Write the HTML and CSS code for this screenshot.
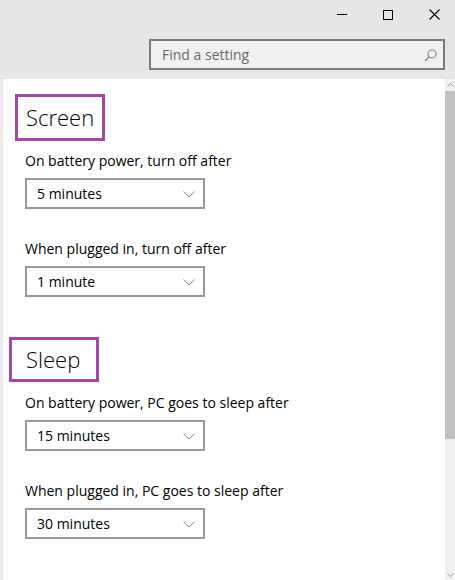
FILE: index.html
```html
<!DOCTYPE html>
<html lang="en">
<head>
  <meta charset="UTF-8">
  <meta name="viewport" content="width=device-width, initial-scale=1.0">
  <title>Power &amp; sleep</title>
  <link rel="stylesheet" href="styles.css">
</head>
<body>
  <div class="window">
    <header class="titlebar">
      <div class="controls">
        <span class="ctl">
          <svg width="10" height="10" viewBox="0 0 10 10"><path d="M0 4.5H10" stroke="#000" stroke-width="1"/></svg>
        </span>
        <span class="ctl">
          <svg width="10" height="10" viewBox="0 0 10 10"><rect x="0.5" y="0.5" width="9" height="9" fill="none" stroke="#000" stroke-width="1"/></svg>
        </span>
        <span class="ctl">
          <svg width="11" height="11" viewBox="0 0 11 11"><path d="M0.5 0.5L10.5 10.5M10.5 0.5L0.5 10.5" stroke="#000" stroke-width="1.1"/></svg>
        </span>
      </div>
      <div class="search">
        <span class="search-text">Find a setting</span>
        <svg class="search-icon" width="13" height="13" viewBox="0 0 13 13"><circle cx="8" cy="5" r="4" fill="none" stroke="#8a8a8a" stroke-width="1.2"/><path d="M5.2 7.8L1 12" stroke="#8a8a8a" stroke-width="1.3"/></svg>
      </div>
    </header>

    <div class="body">
      <main class="content">
        <section>
          <h2 class="section-title screen">Screen</h2>
          <div class="setting">
            <label>On battery power, turn off after</label>
            <div class="dropdown"><span>5 minutes</span><svg width="12" height="7" viewBox="0 0 12 7"><path d="M0.5 0.5L6 6L11.5 0.5" fill="none" stroke="#7a7a7a" stroke-width="0.9"/></svg></div>
          </div>
          <div class="setting">
            <label>When plugged in, turn off after</label>
            <div class="dropdown"><span>1 minute</span><svg width="12" height="7" viewBox="0 0 12 7"><path d="M0.5 0.5L6 6L11.5 0.5" fill="none" stroke="#7a7a7a" stroke-width="0.9"/></svg></div>
          </div>
        </section>

        <section>
          <h2 class="section-title sleep">Sleep</h2>
          <div class="setting">
            <label>On battery power, PC goes to sleep after</label>
            <div class="dropdown"><span>15 minutes</span><svg width="12" height="7" viewBox="0 0 12 7"><path d="M0.5 0.5L6 6L11.5 0.5" fill="none" stroke="#7a7a7a" stroke-width="0.9"/></svg></div>
          </div>
          <div class="setting">
            <label>When plugged in, PC goes to sleep after</label>
            <div class="dropdown"><span>30 minutes</span><svg width="12" height="7" viewBox="0 0 12 7"><path d="M0.5 0.5L6 6L11.5 0.5" fill="none" stroke="#7a7a7a" stroke-width="0.9"/></svg></div>
          </div>
        </section>
      </main>

      <div class="scrollbar">
        <div class="scroll-btn up"><svg width="7" height="4" viewBox="0 0 7 4"><path d="M0.5 3.5L3.5 0.5L6.5 3.5" fill="none" stroke="#a0a0a0" stroke-width="1"/></svg></div>
        <div class="thumb"></div>
        <div class="track"></div>
        <div class="scroll-btn down"><svg width="7" height="4" viewBox="0 0 7 4"><path d="M0.5 0.5L3.5 3.5L6.5 0.5" fill="none" stroke="#a0a0a0" stroke-width="1"/></svg></div>
      </div>
    </div>
  </div>
</body>
</html>
```

FILE: styles.css
```css
html, body { margin: 0; padding: 0; }
body { font-family: "Open Sans", "Noto Sans", sans-serif; background: #fff; color: #000; }
.window { width: 455px; height: 580px; overflow: hidden; display: flex; flex-direction: column; }

.titlebar { background: #e6e6e6; height: 79px; box-sizing: border-box; padding-bottom: 9px; }
.controls { display: flex; justify-content: flex-end; margin-right: -2px; height: 29px; }
.ctl { width: 46px; height: 29px; display: flex; align-items: center; justify-content: center; }
.search { margin: 10px 10px 0 149px; height: 31px; box-sizing: border-box; border: 2px solid #7a7a7a; background: #f0f0f0; display: flex; align-items: center; justify-content: space-between; padding: 0 6px 0 11px; }
.search-text { font-size: 14px; color: #6b6b6b; }
.search-icon { margin-top: 1px; }

.body { flex: 1; display: flex; min-height: 0; }
.content { flex: 1; border-left: 3px solid #ececec; padding-left: 22px; overflow: hidden; }

.section-title { display: inline-block; margin: 15px 0 10px -10px; border: 3px solid #a349a4; font-size: 22px; font-weight: 300; line-height: 41px; padding: 0 8px; color: #000; }
.section-title.sleep { margin: 40px 0 11px -16px; line-height: 39px; padding: 0 16px 0 14px; }

.setting + .setting { margin-top: 30px; }
.setting label { display: block; font-size: 14px; line-height: 20px; margin-bottom: 7px; }

.dropdown { width: 180px; height: 31px; box-sizing: border-box; border: 2px solid #999; display: flex; align-items: center; justify-content: space-between; padding: 0 8px 0 10px; font-size: 14px; }
.dropdown svg { margin-top: 1px; }

.scrollbar { width: 10px; background: #f0f0f0; display: flex; flex-direction: column; }
.scroll-btn { height: 12px; display: flex; align-items: center; justify-content: center; }
.scroll-btn.down { height: 10px; }
.thumb { height: 348px; background: #c1c1c1; }
.track { flex: 1; }
```
